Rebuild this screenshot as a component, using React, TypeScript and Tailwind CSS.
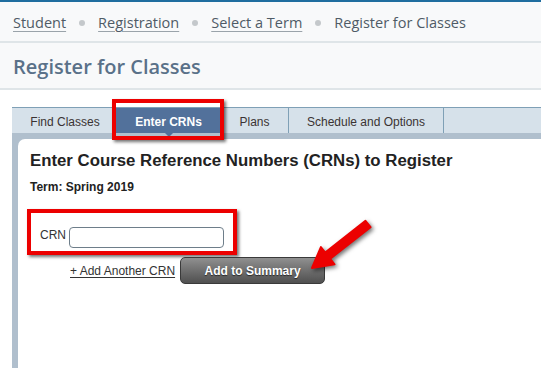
import React from 'react';

const crumbs = ['Student', 'Registration', 'Select a Term'];

const Dot = () => <span className="mx-[13px] inline-block h-[6px] w-[6px] rounded-full bg-[#c4c8cb]" />;

const App = () => {
  return (
    <div className="relative h-[368px] w-[541px] overflow-hidden bg-white">
      <div className="h-[2px] bg-[#1f6d9f]" />

      {/* breadcrumb */}
      <div className="flex h-[41px] items-center border-b-2 border-[#dfe5e8] bg-[#f8f9fa] px-[13px] pt-[2px] font-['Open_Sans',sans-serif] text-[14.5px] text-[#4f5b66]">
        {crumbs.map((c) => (
          <React.Fragment key={c}>
            <span className="underline decoration-[#9aa3aa] underline-offset-[3px]">{c}</span>
            <Dot />
          </React.Fragment>
        ))}
        <span>Register for Classes</span>
      </div>

      {/* page title */}
      <div className="flex h-[47px] items-center border-b-2 border-[#dfe5e8] bg-[#f8f9fa] px-[13px] pt-[2px] font-['Open_Sans',sans-serif] text-[20px] font-semibold text-[#5a7189]">
        Register for Classes
      </div>

      <div className="pl-[12px] pt-[17px] font-['Liberation_Sans',Arial,sans-serif]">
        {/* tabs */}
        <div className="flex h-[26px] border-t border-[#7fa0b6] bg-[#d6e1ea] text-[12px] text-[#3a3333]">
          <div className="flex w-[104px] items-center justify-center border-r border-[#7fa0b6] pl-[3px] pt-[3px]">Find Classes</div>
          <div className="relative flex w-[105px] items-center justify-center bg-[#52719b] pt-[3px] font-bold text-white">
            Enter CRNs
            <span className="absolute bottom-[-4px] left-1/2 h-0 w-0 -translate-x-1/2 border-x-[4px] border-t-[4px] border-x-transparent border-t-[#52719b]" />
            <span className="absolute -left-[4px] -right-[3px] -top-[9px] -bottom-[7px] border-4 border-[#ec0000] shadow-[2px_2px_3px_rgba(0,0,0,0.55)]" />
          </div>
          <div className="flex w-[68px] items-center justify-center border-r border-[#7fa0b6] pt-[3px]">Plans</div>
          <div className="flex w-[155px] items-center justify-center border-r border-[#7fa0b6] pt-[3px]">Schedule and Options</div>
          <div className="flex-1" />
        </div>

        {/* panel */}
        <div className="h-[240px] bg-[#b0bfcd] pl-[6px] pt-[6px]">
          <div className="h-full rounded-tl-[7px] bg-white pl-[12px] pt-[12px] text-[#222]">
            <h2 className="text-[16.8px] leading-[20px] font-bold">Enter Course Reference Numbers (CRNs) to Register</h2>
            <p className="mt-[9px] text-[12px] leading-[14px] font-bold">Term: Spring 2019</p>

            <div className="ml-[-3px] mt-[15px] flex h-[46px] w-[210px] items-end gap-[3px] border-4 border-[#ec0000] pb-[3px] pl-[9px] shadow-[2px_2px_3px_rgba(0,0,0,0.55)]">
              <span className="mb-[4px] text-[12px] text-[#333]">CRN</span>
              <input className="h-[21px] w-[155px] rounded-[4px] border border-[#6e7e8a] bg-white" />
            </div>

            <div className="ml-[40px] mt-[2px] flex items-center gap-[5px]">
              <span className="text-[12px] text-[#333] underline underline-offset-[2px]">+ Add Another CRN</span>
              <button className="h-[27px] w-[145px] rounded-[5px] border border-[#3a3a3a] bg-gradient-to-b from-[#909090] to-[#505050] text-[12px] font-bold text-white [text-shadow:0_1px_1px_rgba(0,0,0,0.6)]">
                Add to Summary
              </button>
            </div>
          </div>
        </div>
      </div>

      {/* annotation arrow */}
      <svg className="absolute left-0 top-0" width="541" height="368" style={{ filter: 'drop-shadow(2px 2px 2px rgba(0,0,0,0.55))' }}>
        <polygon
          points="312,268 334.5,264.3 330.2,258.8 370.5,227.1 365.5,220.9 325.2,252.6 320.9,247.1"
          fill="#ec0000"
          stroke="#ec0000"
          strokeWidth="2"
          strokeLinejoin="round"
        />
      </svg>
    </div>
  );
};

export default App;
